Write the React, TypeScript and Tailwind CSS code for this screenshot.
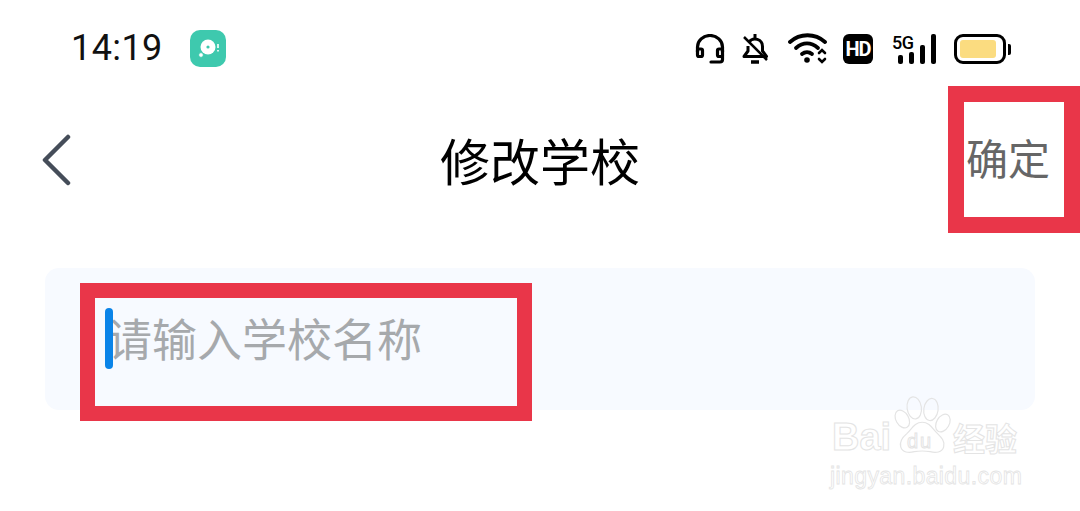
import { useState } from "react";

const cjk = "font-['Noto_Sans_CJK_SC','Noto_Sans',sans-serif]";

function StatusIcons() {
  return (
    <div className="flex items-center">
      {/* headset */}
      <svg width="30" height="30" viewBox="0 0 30 30" fill="none" stroke="#000" strokeWidth="3.2" className="mr-[16px]">
        <path d="M2.5 18V13a12.5 11.5 0 0 1 25 0v5" />
        <rect x="2.5" y="15" width="5" height="7.5" rx="1.5" />
        <rect x="22.5" y="15" width="5" height="7.5" rx="1.5" />
        <path d="M27.5 21v4.5a2.5 2.5 0 0 1-2.5 2.5h-9" strokeLinecap="round" />
      </svg>
      {/* muted bell */}
      <svg width="28" height="32" viewBox="0 0 28 32" fill="none" stroke="#000" strokeWidth="3" className="mr-[19px]">
        <path d="M14 1v4" />
        <path d="M8 9a7.5 7.5 0 0 1 13.5 4.5V18l4 5.5H3L7 18v-5" strokeLinejoin="round" />
        <path d="M10 29h8" strokeWidth="3.5" />
        <path d="M3 4l23 23" strokeWidth="2.5" />
      </svg>
      {/* wifi with arrows */}
      <svg width="40" height="32" viewBox="0 0 40 32" fill="none" stroke="#000" strokeWidth="3.8" strokeLinecap="round" className="mr-[15px]">
        <path d="M2 9C12 0 27 0 37 9" />
        <path d="M8 15C15 9 23 9 30 15" />
        <path d="M14 21c3-2.500 7-2.500 10 0" />
        <circle cx="19" cy="27" r="2.8" fill="#000" stroke="none" />
        <path d="M31 20l3-3 3 3M31 26l3 3 3-3" strokeWidth="2.6" />
      </svg>
      {/* HD */}
      <div className="mr-[19px] flex h-[30px] w-[30px] items-center justify-center rounded-[6px] bg-black font-['Roboto',sans-serif] text-[20px] font-bold tracking-[-1px] text-white">
        HD
      </div>
      {/* 5G + signal */}
      <div className="relative mr-[18px] h-[30px] w-[44px]">
        <span className="absolute top-[-5px] left-0 font-['Roboto',sans-serif] text-[18px] font-medium tracking-[-0.5px] text-black">5G</span>
        <div className="absolute inset-0 flex items-end justify-end gap-[6px]">
          <div className="h-[9px] w-[5px] rounded-[2px] bg-black" />
          <div className="h-[12px] w-[5px] rounded-[2px] bg-black" />
          <div className="h-[19px] w-[5px] rounded-[2px] bg-black" />
          <div className="h-[30px] w-[5px] rounded-[2px] bg-black" />
        </div>
      </div>
      {/* battery */}
      <div className="flex items-center">
        <div className="h-[30px] w-[52px] rounded-[9px] border-[3px] border-black bg-white p-[3px]">
          <div className="h-full w-[36px] rounded-[3px] bg-[#fbdc80]" />
        </div>
        <div className="ml-[2px] h-[11px] w-[3px] rounded-r-[2px] bg-black" />
      </div>
    </div>
  );
}

function Watermark() {
  return (
    <div className="absolute top-[396px] left-[829px] h-[100px] w-[195px] select-none">
      <svg width="104" height="70" viewBox="0 0 130 88" fill="none" stroke="#e4e4e4" strokeWidth="1.5" className="absolute top-[-4px] left-[42px]">
        <ellipse cx="54" cy="20" rx="9" ry="14" transform="rotate(-8 54 20)" />
        <ellipse cx="75" cy="22" rx="9" ry="14" transform="rotate(8 75 22)" />
        <ellipse cx="39" cy="34" rx="8" ry="12" transform="rotate(-30 39 34)" />
        <ellipse cx="90" cy="39" rx="8" ry="12" transform="rotate(30 90 39)" />
        <path d="M64 38c-9 0-13 8-19 14-6 5-10 10-8 17 2 7 10 8 17 6 6-1 14-1 20 0 7 2 15 1 17-6 2-7-3-12-8-17-6-6-10-14-19-14z" />
      </svg>
      <div className="absolute top-[22px] left-[3px] font-['Liberation_Sans',sans-serif] text-[38px] leading-none font-bold text-transparent [-webkit-text-stroke:1px_#e4e4e4]">
        Bai
      </div>
      <div className="absolute top-[35px] left-[78px] font-['Liberation_Sans',sans-serif] text-[20px] leading-none tracking-[2px] text-transparent [-webkit-text-stroke:1px_#e4e4e4]">
        du
      </div>
      <div className={`absolute top-[21px] left-[124px] ${cjk} text-[32px] leading-[40px] font-bold text-transparent [-webkit-text-stroke:1px_#e4e4e4]`}>
        经验
      </div>
      <div className="absolute top-[66px] left-[1px] font-['Liberation_Sans',sans-serif] text-[23px] leading-[28px] tracking-[0.4px] text-transparent [-webkit-text-stroke:0.8px_#e4e4e4]">
        jingyan.baidu.com
      </div>
    </div>
  );
}

export default function App() {
  const [school, setSchool] = useState("");

  return (
    <div className="relative h-[511px] w-[1080px] overflow-hidden bg-white">
      {/* Status bar */}
      <div className="flex h-[86px] items-start justify-between pt-[28px] pr-[69px] pl-[71px]">
        <div className="flex items-center">
          <span className="font-['Roboto',sans-serif] text-[36px] leading-[40px] tracking-[0.4px] text-[#111]">14:19</span>
          <div className="ml-[27px] flex h-[37px] w-[36px] items-center justify-center rounded-[10px] bg-[#3ec9ae]">
            <svg width="26" height="26" viewBox="0 0 26 26">
              <circle cx="13" cy="12" r="7.5" fill="#fff" />
              <circle cx="13" cy="12" r="1.6" fill="#3ec9ae" />
              <circle cx="6" cy="20" r="2.4" fill="#fff" stroke="#3ec9ae" strokeWidth="1" />
              <path d="M23 9v4M23 15v1.5" stroke="#fff" strokeWidth="1.6" />
            </svg>
          </div>
        </div>
        <div className="pt-[5px]">
          <StatusIcons />
        </div>
      </div>

      {/* Nav bar */}
      <div className="relative flex h-[147px] items-center justify-between pr-[30px] pl-[41px]">
        <svg width="30" height="54" viewBox="0 0 30 54" fill="none" stroke="#454d59" strokeWidth="4.5" strokeLinecap="round" strokeLinejoin="round">
          <path d="M27 4L4 27l23 23" />
        </svg>
        <h1 className={`absolute top-[43px] left-[440px] ${cjk} text-[50px] leading-[60px] font-normal text-black`}>修改学校</h1>
        <button className={`${cjk} mb-[5px] text-[42px] leading-[50px] text-[#666]`}>确定</button>
        <div className="pointer-events-none absolute top-0 right-0 h-[147px] w-[132px] border-[16px] border-[#e93649]" />
      </div>

      {/* School input */}
      <div className="mx-[45px] mt-[35px] flex h-[142px] items-center rounded-[14px] bg-[#f7faff] pb-[2px] pl-[62px]">
        <div className="relative">
          <input
            value={school}
            onChange={(e) => setSchool(e.target.value)}
            placeholder="请输入学校名称"
            className={`w-[400px] bg-transparent ${cjk} text-[45px] leading-[60px] text-[#333] outline-none placeholder:text-[#a6a9ac]`}
          />
          <div className="absolute top-0 left-[-2px] h-[61px] w-[8px] rounded-full bg-[#0a84e8]" />
        </div>
      </div>
      <div className="pointer-events-none absolute top-[283px] left-[80px] h-[138px] w-[452px] border-[15px] border-[#e93649]" />

      <Watermark />
    </div>
  );
}
